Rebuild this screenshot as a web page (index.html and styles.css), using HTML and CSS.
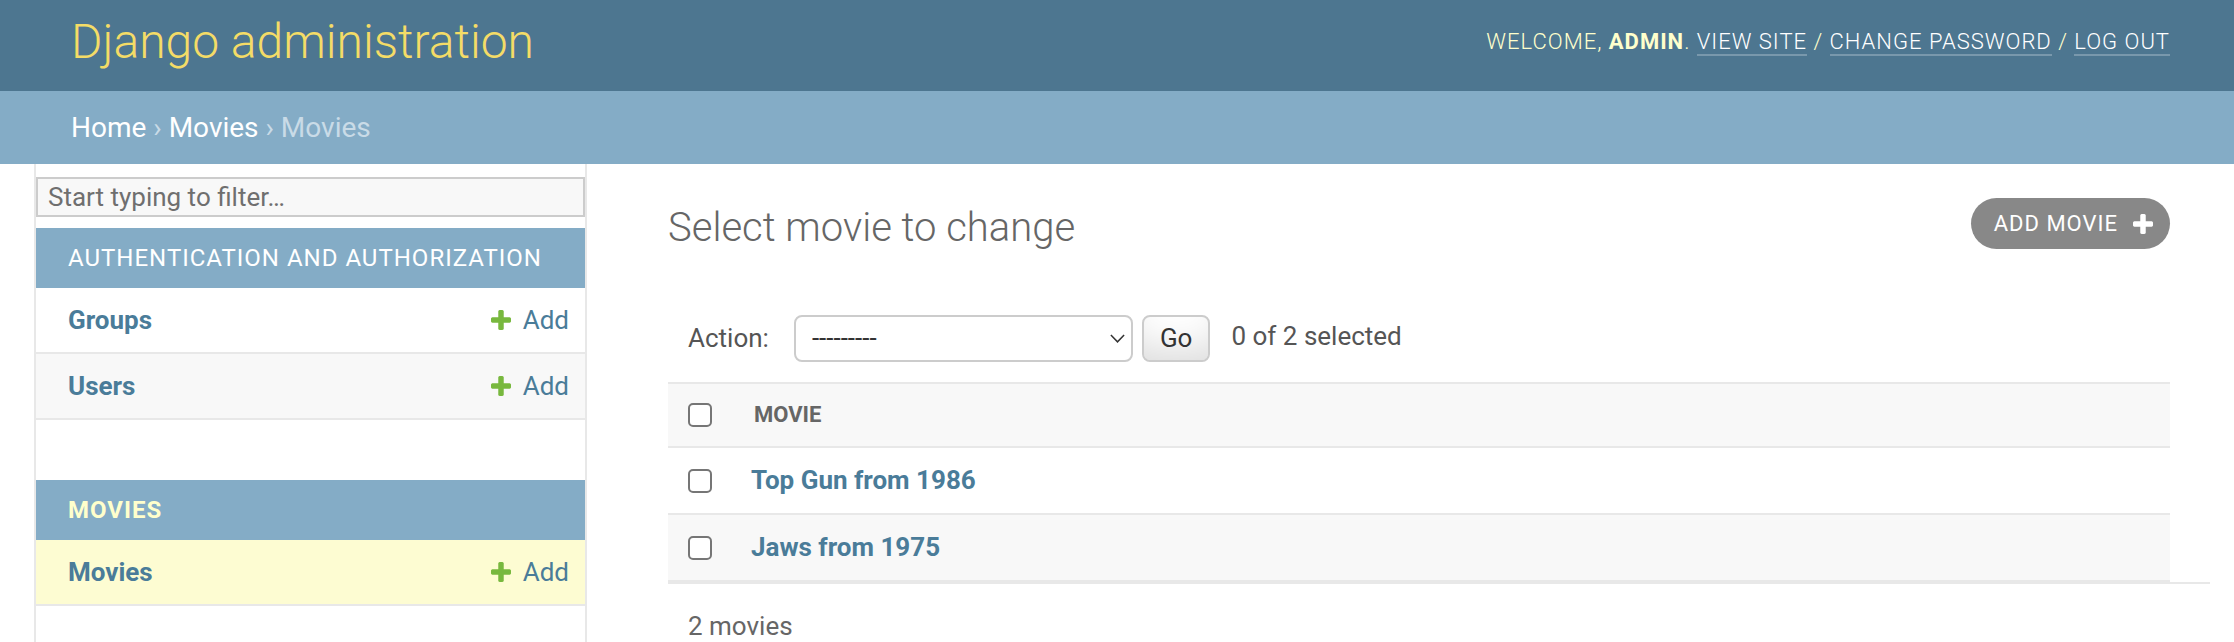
FILE: index.html
```html
<!DOCTYPE html>
<html lang="en">
<head>
<meta charset="utf-8">
<title>Select movie to change | Django site admin</title>
<link rel="stylesheet" href="styles.css">
</head>
<body>
<header class="header">
  <h1 class="site-name">Django administration</h1>
  <div class="user-tools">Welcome, <strong>admin</strong>. <a href="#">View site</a> / <a href="#">Change password</a> / <a href="#">Log out</a></div>
</header>
<nav class="breadcrumbs"><a href="#">Home</a> › <a href="#">Movies</a> › Movies</nav>
<div class="main">
  <div class="toggle"></div>
  <aside class="sidebar">
    <input class="nav-filter" type="search" placeholder="Start typing to filter…">
    <div class="module">
      <div class="caption">Authentication and Authorization</div>
      <div class="row">
        <a class="name" href="#">Groups</a>
        <a class="addlink" href="#"><svg class="plus" viewBox="192 128 1408 1408"><path fill="#78b83e" d="M1600 736v192q0 40-28 68t-68 28h-416v416q0 40-28 68t-68 28h-192q-40 0-68-28t-28-68v-416h-416q-40 0-68-28t-28-68v-192q0-40 28-68t68-28h416v-416q0-40 28-68t68-28h192q40 0 68 28t28 68v416h416q40 0 68 28t28 68z"/></svg>Add</a>
      </div>
      <div class="row alt">
        <a class="name" href="#">Users</a>
        <a class="addlink" href="#"><svg class="plus" viewBox="192 128 1408 1408"><path fill="#78b83e" d="M1600 736v192q0 40-28 68t-68 28h-416v416q0 40-28 68t-68 28h-192q-40 0-68-28t-28-68v-416h-416q-40 0-68-28t-28-68v-192q0-40 28-68t68-28h416v-416q0-40 28-68t68-28h192q40 0 68 28t28 68v416h416q40 0 68 28t28 68z"/></svg>Add</a>
      </div>
    </div>
    <div class="module">
      <div class="caption current">Movies</div>
      <div class="row current">
        <a class="name" href="#">Movies</a>
        <a class="addlink" href="#"><svg class="plus" viewBox="192 128 1408 1408"><path fill="#78b83e" d="M1600 736v192q0 40-28 68t-68 28h-416v416q0 40-28 68t-68 28h-192q-40 0-68-28t-28-68v-416h-416q-40 0-68-28t-28-68v-192q0-40 28-68t68-28h416v-416q0-40 28-68t68-28h192q40 0 68 28t28 68v416h416q40 0 68 28t28 68z"/></svg>Add</a>
      </div>
    </div>
  </aside>
  <div class="content">
    <div class="content-head">
      <h1 class="title">Select movie to change</h1>
      <a class="add-btn" href="#">Add movie<svg class="plus-white" viewBox="192 128 1408 1408"><path fill="#fff" d="M1600 736v192q0 40-28 68t-68 28h-416v416q0 40-28 68t-68 28h-192q-40 0-68-28t-28-68v-416h-416q-40 0-68-28t-28-68v-192q0-40 28-68t68-28h416v-416q0-40 28-68t68-28h192q40 0 68 28t28 68v416h416q40 0 68 28t28 68z"/></svg></a>
    </div>
    <div class="actions">
      <label class="action-label">Action:</label>
      <div class="select-wrap">
        <select class="action-select"><option>---------</option><option>Delete selected movies</option></select>
        <svg class="chevron" viewBox="0 0 15 9"><polyline points="0.9,0.9 7.5,7.8 14.1,0.9" fill="none" stroke="#333" stroke-width="1.5"/></svg>
      </div>
      <button class="go" type="button">Go</button>
      <span class="counter">0 of 2 selected</span>
    </div>
    <table class="results">
      <thead>
        <tr><th class="cb-col"><input class="cb" type="checkbox"></th><th class="col-movie">Movie</th></tr>
      </thead>
      <tbody>
        <tr class="r1"><td class="cb-col"><input class="cb" type="checkbox"></td><th class="obj"><a href="#">Top Gun from 1986</a></th></tr>
        <tr class="r2"><td class="cb-col"><input class="cb" type="checkbox"></td><th class="obj"><a href="#">Jaws from 1975</a></th></tr>
      </tbody>
    </table>
    <p class="paginator">2 movies</p>
  </div>
</div>
</body>
</html>
```
FILE: styles.css
```css
* { box-sizing: border-box; }
html, body { margin: 0; padding: 0; }
body {
  font-family: Roboto, "Liberation Sans", sans-serif;
  font-size: 28px;
  color: #333;
  background: #fff;
  width: 2234px;
  height: 642px;
  overflow: hidden;
}
a { text-decoration: none; }

/* header */
.header {
  display: flex;
  justify-content: space-between;
  align-items: center;
  height: 91px;
  padding: 0 64px 8px 71px;
  background: #4d7690;
}
.site-name {
  margin: 0;
  font-weight: 300;
  font-size: 48px;
  line-height: 56px;
  color: #f4dc67;
}
.user-tools {
  font-weight: 300;
  font-size: 22px;
  line-height: 26px;
  letter-spacing: 1px;
  text-transform: uppercase;
  color: #ffc;
}
.user-tools strong { font-weight: 700; }
.user-tools a {
  color: #fff;
  border-bottom: 2px solid rgba(255, 255, 255, 0.25);
}

/* breadcrumbs */
.breadcrumbs {
  height: 73px;
  line-height: 73px;
  padding: 0 71px;
  background: #84acc6;
  color: #c9dbe7;
  font-size: 28px;
}
.breadcrumbs a { color: #fff; }

/* main layout */
.main {
  display: flex;
  height: 478px;
}
.toggle {
  flex: 0 0 36px;
  border-right: 2px solid #e8e8e8;
}
.sidebar {
  flex: 0 0 551px;
  border-right: 2px solid #e8e8e8;
}
.nav-filter {
  display: block;
  width: 100%;
  height: 40px;
  margin: 13px 0 11px;
  padding: 0 10px;
  border: 2px solid #ccc;
  background: #f8f8f8;
  font-family: Roboto, "Liberation Sans", sans-serif;
  font-size: 26px;
  color: #333;
  outline: none;
}
.nav-filter::placeholder { color: #6f6f6f; }

.module { margin-bottom: 60px; }
.caption {
  padding: 16px 32px;
  line-height: 28px;
  font-size: 24px;
  letter-spacing: 1px;
  white-space: nowrap;
  background: #84acc6;
  color: #fff;
  text-transform: uppercase;
}
.caption.current {
  font-weight: 700;
  color: #ffc;
}
.row {
  display: flex;
  justify-content: space-between;
  align-items: center;
  padding: 16px 16px 16px 32px;
  line-height: 32px;
  font-size: 26px;
  border-bottom: 2px solid #e8e8e8;
}
.row.alt { background: #f8f8f8; }
.row.current { background: #fdfcd2; }
.row .name {
  font-weight: 700;
  color: #4a7c99;
}
.addlink {
  display: flex;
  align-items: center;
  gap: 12px;
  color: #4a7c99;
}
.plus { width: 20px; height: 20px; }

/* content */
.content {
  flex: 1;
  min-width: 0;
  padding: 40px 64px 0 81px;
}
.content-head {
  display: flex;
  justify-content: space-between;
  align-items: flex-start;
}
.title {
  margin: 0;
  font-size: 40px;
  font-weight: 300;
  line-height: 47px;
  color: #666;
}
.add-btn {
  display: flex;
  align-items: center;
  gap: 15px;
  height: 51px;
  margin-top: -6px;
  padding: 0 17px 0 23px;
  border-radius: 26px;
  background: #888;
  color: #fff;
  font-size: 22px;
  letter-spacing: 1px;
  text-transform: uppercase;
}
.plus-white { width: 20px; height: 20px; }

.actions {
  display: flex;
  align-items: center;
  height: 88px;
  margin-top: 43px;
  padding: 0 20px;
  font-size: 26px;
  color: #666;
}
.action-label { color: #555; }
.select-wrap {
  position: relative;
  margin-left: 25px;
}
.action-select {
  appearance: none;
  -webkit-appearance: none;
  display: block;
  width: 339px;
  height: 47px;
  padding: 0 0 0 16px;
  border: 2px solid #ccc;
  border-radius: 8px;
  background: #fff;
  font-family: Roboto, "Liberation Sans", sans-serif;
  font-size: 26px;
  color: #333;
}
.chevron {
  position: absolute;
  right: 8px;
  top: 19px;
  width: 15px;
  height: 9px;
}
.go {
  height: 47px;
  margin-left: 9px;
  padding: 0 16px;
  border: 2px solid #ccc;
  border-radius: 8px;
  background: #fff;
  box-shadow: 0 -30px 40px -20px rgba(0, 0, 0, 0.15) inset;
  font-family: Roboto, "Liberation Sans", sans-serif;
  font-size: 26px;
  color: #333;
}
.counter {
  margin-left: 21px;
  margin-top: -5px;
  color: #555;
}

.results {
  width: 100%;
  border-collapse: separate;
  border-spacing: 0;
  font-size: 26px;
}
.results th, .results td { text-align: left; }
.results thead th {
  background: #f8f8f8;
  border-top: 2px solid #e8e8e8;
  border-bottom: 2px solid #e8e8e8;
  padding: 15px 20px;
  line-height: 32px;
  font-size: 22px;
  font-weight: 700;
  color: #666;
  text-transform: uppercase;
  vertical-align: middle;
}
.results tbody td, .results tbody th {
  padding: 16px 17px;
  line-height: 33px;
  border-bottom: 2px solid #e8e8e8;
  vertical-align: middle;
}
.results .cb-col {
  width: 66px;
  padding-left: 20px;
  padding-right: 0;
}
.results tbody .r2 td, .results tbody .r2 th { background: #f8f8f8; }
.results .obj a {
  font-weight: 700;
  color: #4a7c99;
}
.cb {
  appearance: none;
  -webkit-appearance: none;
  display: block;
  width: 24px;
  height: 24px;
  margin: 0;
  border: 2px solid #767676;
  border-radius: 5px;
  background: #fff;
}
.paginator {
  margin: 0 -40px 0 0;
  padding: 20px;
  border-top: 2px solid #e8e8e8;
  line-height: 44px;
  font-size: 26px;
  color: #666;
}
```
